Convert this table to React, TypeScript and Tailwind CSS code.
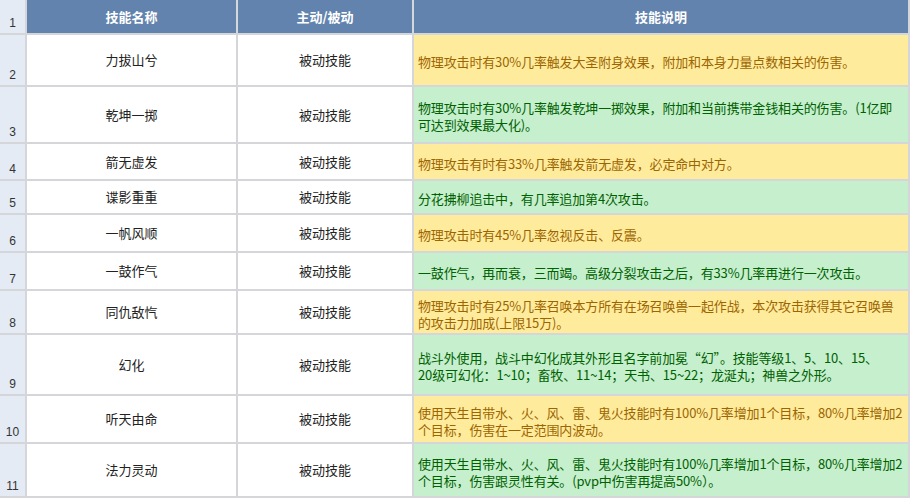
import React from 'react';

type Row = {
  no: number;
  name: string;
  kind: string;
  desc: string[];
  tone: 'yellow' | 'green';
};

const rows: Row[] = [
  { no: 2, name: '力拔山兮', kind: '被动技能', tone: 'yellow', desc: ['物理攻击时有30%几率触发大圣附身效果，附加和本身力量点数相关的伤害。'] },
  { no: 3, name: '乾坤一掷', kind: '被动技能', tone: 'green', desc: ['物理攻击时有30%几率触发乾坤一掷效果，附加和当前携带金钱相关的伤害。(1亿即', '可达到效果最大化)。'] },
  { no: 4, name: '箭无虚发', kind: '被动技能', tone: 'yellow', desc: ['物理攻击有时有33%几率触发箭无虚发，必定命中对方。'] },
  { no: 5, name: '谍影重重', kind: '被动技能', tone: 'green', desc: ['分花拂柳追击中，有几率追加第4次攻击。'] },
  { no: 6, name: '一帆风顺', kind: '被动技能', tone: 'yellow', desc: ['物理攻击时有45%几率忽视反击、反震。'] },
  { no: 7, name: '一鼓作气', kind: '被动技能', tone: 'green', desc: ['一鼓作气，再而衰，三而竭。高级分裂攻击之后，有33%几率再进行一次攻击。'] },
  { no: 8, name: '同仇敌忾', kind: '被动技能', tone: 'yellow', desc: ['物理攻击时有25%几率召唤本方所有在场召唤兽一起作战，本次攻击获得其它召唤兽', '的攻击力加成(上限15万)。'] },
  { no: 9, name: '幻化', kind: '被动技能', tone: 'green', desc: ['战斗外使用，战斗中幻化成其外形且名字前加冕“幻”。技能等级1、5、10、15、', '20级可幻化：1~10；畜牧、11~14；天书、15~22；龙涎丸；神兽之外形。'] },
  { no: 10, name: '听天由命', kind: '被动技能', tone: 'yellow', desc: ['使用天生自带水、火、风、雷、鬼火技能时有100%几率增加1个目标，80%几率增加2', '个目标，伤害在一定范围内波动。'] },
  { no: 11, name: '法力灵动', kind: '被动技能', tone: 'green', desc: ['使用天生自带水、火、风、雷、鬼火技能时有100%几率增加1个目标，80%几率增加2', '个目标，伤害跟灵性有关。(pvp中伤害再提高50%）。'] },
];

const cjk = { fontFamily: '"Noto Sans CJK SC", "Noto Sans", sans-serif' };

export default function App() {
  return (
    <div className="w-[912px] h-[500px] bg-white overflow-hidden" style={cjk}>
      <div className="grid grid-cols-[25px_209px_174px_494px] grid-rows-[33px_50px_55px_35px_32px_36px_36px_42px_59px_46px_52px] gap-[2px] bg-[#d4d6d9] pr-[2px] pb-[2px] w-[910px]">
        {/* header */}
        <div className="bg-[#e4ebf5] flex items-end justify-center pb-[1px] text-[12px] text-[#333] font-['Liberation_Sans',sans-serif]">1</div>
        <div className="bg-[#6283ad] flex items-center justify-center text-white font-bold text-[13px]">技能名称</div>
        <div className="bg-[#6283ad] flex items-center justify-center text-white font-bold text-[13px]">主动/被动</div>
        <div className="bg-[#6283ad] flex items-center justify-center text-white font-bold text-[13px]">技能说明</div>

        {rows.map((r) => (
          <React.Fragment key={r.no}>
            <div className="bg-[#e4ebf5] flex items-end justify-center pb-[1px] text-[12px] text-[#333] font-['Liberation_Sans',sans-serif]">
              {r.no}
            </div>
            <div className="bg-white flex items-center justify-center text-[13px] text-[#222]">{r.name}</div>
            <div className="bg-white flex items-center justify-center text-[13px] text-[#222]">{r.kind}</div>
            <div
              className={`flex flex-col justify-center pl-[4px] pt-[3px] text-[13px] leading-[17px] tracking-[-0.15px] whitespace-nowrap overflow-hidden ${
                r.tone === 'yellow' ? 'bg-[#ffeb9c] text-[#9c6500]' : 'bg-[#c6efce] text-[#006100]'
              }`}
            >
              {r.desc.map((line, i) => (
                <div key={i}>{line}</div>
              ))}
            </div>
          </React.Fragment>
        ))}
      </div>
    </div>
  );
}
